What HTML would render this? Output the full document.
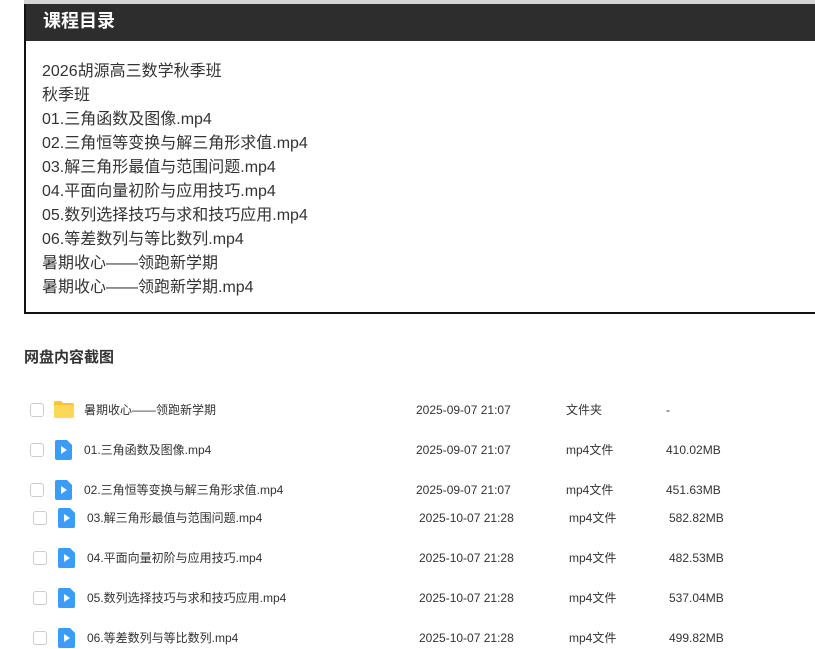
<!DOCTYPE html>
<html><head><meta charset="utf-8"><style>
body{margin:0;width:815px;height:649px;background:#fff;position:relative;overflow:hidden;font-family:"Liberation Sans","Noto Sans CJK SC",sans-serif;}
.top{position:absolute;left:24px;top:0;width:791px;height:5px;background:#d4d4d4}
.box{position:absolute;left:24px;top:4px;width:800px;height:310px;border-left:2px solid #111;border-bottom:2px solid #111;box-sizing:border-box}
.hd{height:37px;background:#2d2d2d;color:#fff;font-weight:bold;font-size:18px;line-height:34px;padding-left:17px}
.list{position:absolute;left:16px;top:56px;font-size:16px;line-height:24px;color:#333}
h3{position:absolute;left:24px;top:346px;margin:0;font-size:15px;color:#333;font-weight:bold}
.row{position:absolute;height:20px;font-size:12px;color:#333;line-height:20px}
.row span{position:absolute;white-space:nowrap}
.cb{position:absolute;left:0;top:3px;width:12px;height:12px;border:1px solid #ccc;border-radius:3px}
</style></head><body>
<div class="top"></div>
<div class="box"><div class="hd">课程目录</div>
<div class="list">2026胡源高三数学秋季班<br>秋季班<br>01.三角函数及图像.mp4<br>02.三角恒等变换与解三角形求值.mp4<br>03.解三角形最值与范围问题.mp4<br>04.平面向量初阶与应用技巧.mp4<br>05.数列选择技巧与求和技巧应用.mp4<br>06.等差数列与等比数列.mp4<br>暑期收心——领跑新学期<br>暑期收心——领跑新学期.mp4</div></div>
<h3>网盘内容截图</h3>

<div class="row" style="left:30px;top:400px"><div class="cb"></div><svg style="position:absolute;left:23px;top:0" width="22" height="19"><path d="M1 3a2 2 0 0 1 2-2h5l2 2h9a2 2 0 0 1 2 2v11a2 2 0 0 1-2 2H3a2 2 0 0 1-2-2z" fill="#f9c433"/><rect x="1" y="5" width="20" height="13" rx="2" fill="#fdd757"/></svg><span style="left:54px">暑期收心——领跑新学期</span><span style="left:386px">2025-09-07 21:07</span><span style="left:536px">文件夹</span><span style="left:636px">-</span></div>

<div class="row" style="left:30px;top:440px"><div class="cb"></div><svg style="position:absolute;left:25px;top:0" width="18" height="20"><path d="M2 0h10l5 5v13a2 2 0 0 1-2 2H2a2 2 0 0 1-2-2V2a2 2 0 0 1 2-2z" fill="#3a9cf5"/><path d="M6 6l6 4-6 4z" fill="#fff"/></svg><span style="left:54px">01.三角函数及图像.mp4</span><span style="left:386px">2025-09-07 21:07</span><span style="left:536px">mp4文件</span><span style="left:636px">410.02MB</span></div>

<div class="row" style="left:30px;top:480px"><div class="cb"></div><svg style="position:absolute;left:25px;top:0" width="18" height="20"><path d="M2 0h10l5 5v13a2 2 0 0 1-2 2H2a2 2 0 0 1-2-2V2a2 2 0 0 1 2-2z" fill="#3a9cf5"/><path d="M6 6l6 4-6 4z" fill="#fff"/></svg><span style="left:54px">02.三角恒等变换与解三角形求值.mp4</span><span style="left:386px">2025-09-07 21:07</span><span style="left:536px">mp4文件</span><span style="left:636px">451.63MB</span></div>

<div class="row" style="left:33px;top:508px"><div class="cb"></div><svg style="position:absolute;left:25px;top:0" width="18" height="20"><path d="M2 0h10l5 5v13a2 2 0 0 1-2 2H2a2 2 0 0 1-2-2V2a2 2 0 0 1 2-2z" fill="#3a9cf5"/><path d="M6 6l6 4-6 4z" fill="#fff"/></svg><span style="left:54px">03.解三角形最值与范围问题.mp4</span><span style="left:386px">2025-10-07 21:28</span><span style="left:536px">mp4文件</span><span style="left:636px">582.82MB</span></div>

<div class="row" style="left:33px;top:548px"><div class="cb"></div><svg style="position:absolute;left:25px;top:0" width="18" height="20"><path d="M2 0h10l5 5v13a2 2 0 0 1-2 2H2a2 2 0 0 1-2-2V2a2 2 0 0 1 2-2z" fill="#3a9cf5"/><path d="M6 6l6 4-6 4z" fill="#fff"/></svg><span style="left:54px">04.平面向量初阶与应用技巧.mp4</span><span style="left:386px">2025-10-07 21:28</span><span style="left:536px">mp4文件</span><span style="left:636px">482.53MB</span></div>

<div class="row" style="left:33px;top:588px"><div class="cb"></div><svg style="position:absolute;left:25px;top:0" width="18" height="20"><path d="M2 0h10l5 5v13a2 2 0 0 1-2 2H2a2 2 0 0 1-2-2V2a2 2 0 0 1 2-2z" fill="#3a9cf5"/><path d="M6 6l6 4-6 4z" fill="#fff"/></svg><span style="left:54px">05.数列选择技巧与求和技巧应用.mp4</span><span style="left:386px">2025-10-07 21:28</span><span style="left:536px">mp4文件</span><span style="left:636px">537.04MB</span></div>

<div class="row" style="left:33px;top:628px"><div class="cb"></div><svg style="position:absolute;left:25px;top:0" width="18" height="20"><path d="M2 0h10l5 5v13a2 2 0 0 1-2 2H2a2 2 0 0 1-2-2V2a2 2 0 0 1 2-2z" fill="#3a9cf5"/><path d="M6 6l6 4-6 4z" fill="#fff"/></svg><span style="left:54px">06.等差数列与等比数列.mp4</span><span style="left:386px">2025-10-07 21:28</span><span style="left:536px">mp4文件</span><span style="left:636px">499.82MB</span></div>
</body></html>
